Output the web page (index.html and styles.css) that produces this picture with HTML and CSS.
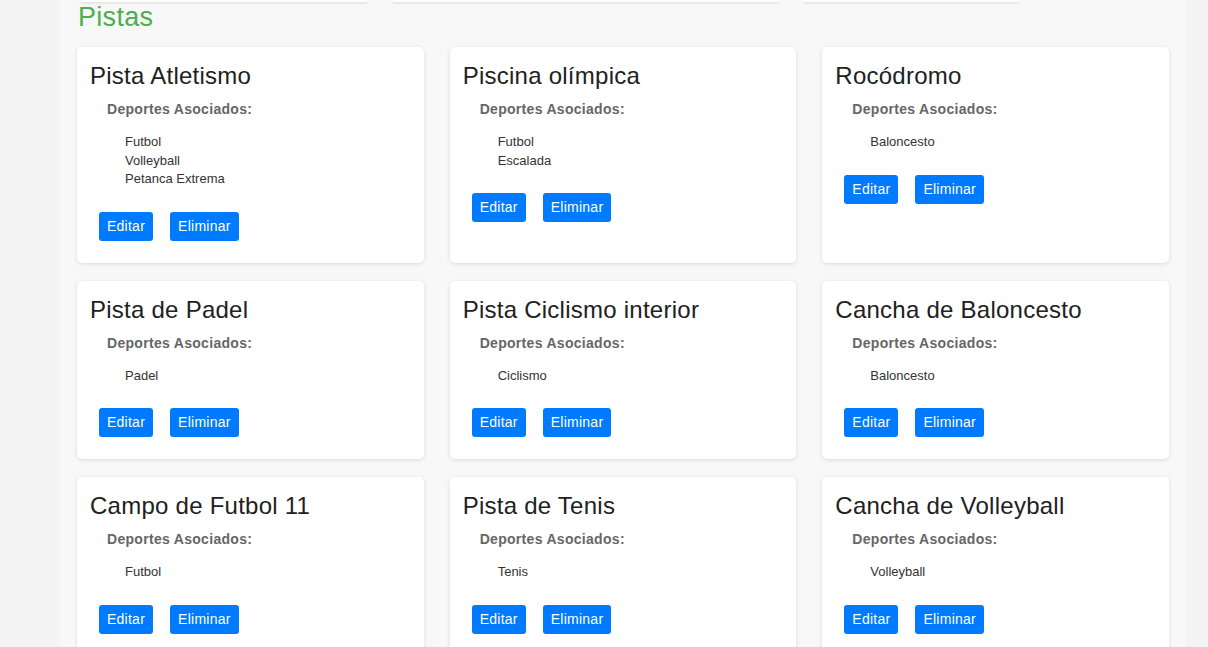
FILE: index.html
```html
<!DOCTYPE html>
<html lang="es">
<head>
<meta charset="utf-8">
<title>Pistas</title>
<link rel="stylesheet" href="styles.css">
</head>
<body>
<div class="page">
  <main class="container">
    <div class="prev-row">
      <div class="prev-card prev-a"></div>
      <div class="prev-card prev-b"></div>
      <div class="prev-card prev-c"></div>
    </div>
    <h2 class="section-title">Pistas</h2>
    <div class="grid">
      <div class="card">
        <h3 class="card-title">Pista Atletismo</h3>
        <p class="label">Deportes Asociados:</p>
        <ul class="sports"><li>Futbol</li><li>Volleyball</li><li>Petanca Extrema</li></ul>
        <div class="actions"><button class="btn">Editar</button><button class="btn">Eliminar</button></div>
      </div>
      <div class="card">
        <h3 class="card-title">Piscina olímpica</h3>
        <p class="label">Deportes Asociados:</p>
        <ul class="sports"><li>Futbol</li><li>Escalada</li></ul>
        <div class="actions"><button class="btn">Editar</button><button class="btn">Eliminar</button></div>
      </div>
      <div class="card">
        <h3 class="card-title">Rocódromo</h3>
        <p class="label">Deportes Asociados:</p>
        <ul class="sports"><li>Baloncesto</li></ul>
        <div class="actions"><button class="btn">Editar</button><button class="btn">Eliminar</button></div>
      </div>
      <div class="card">
        <h3 class="card-title">Pista de Padel</h3>
        <p class="label">Deportes Asociados:</p>
        <ul class="sports"><li>Padel</li></ul>
        <div class="actions"><button class="btn">Editar</button><button class="btn">Eliminar</button></div>
      </div>
      <div class="card">
        <h3 class="card-title">Pista Ciclismo interior</h3>
        <p class="label">Deportes Asociados:</p>
        <ul class="sports"><li>Ciclismo</li></ul>
        <div class="actions"><button class="btn">Editar</button><button class="btn">Eliminar</button></div>
      </div>
      <div class="card">
        <h3 class="card-title">Cancha de Baloncesto</h3>
        <p class="label">Deportes Asociados:</p>
        <ul class="sports"><li>Baloncesto</li></ul>
        <div class="actions"><button class="btn">Editar</button><button class="btn">Eliminar</button></div>
      </div>
      <div class="card">
        <h3 class="card-title">Campo de Futbol 11</h3>
        <p class="label">Deportes Asociados:</p>
        <ul class="sports"><li>Futbol</li></ul>
        <div class="actions"><button class="btn">Editar</button><button class="btn">Eliminar</button></div>
      </div>
      <div class="card">
        <h3 class="card-title">Pista de Tenis</h3>
        <p class="label">Deportes Asociados:</p>
        <ul class="sports"><li>Tenis</li></ul>
        <div class="actions"><button class="btn">Editar</button><button class="btn">Eliminar</button></div>
      </div>
      <div class="card">
        <h3 class="card-title">Cancha de Volleyball</h3>
        <p class="label">Deportes Asociados:</p>
        <ul class="sports"><li>Volleyball</li></ul>
        <div class="actions"><button class="btn">Editar</button><button class="btn">Eliminar</button></div>
      </div>
    </div>
  </main>
</div>
</body>
</html>
```

FILE: styles.css
```css
* { box-sizing: border-box; }

html, body {
  margin: 0;
  padding: 0;
  background: #f4f4f4;
  font-family: "Liberation Sans", Arial, sans-serif;
  color: #222;
}

.page {
  height: 647px;
  overflow: hidden;
}

.container {
  margin-left: 60px;
  width: 1126px;
  min-height: 647px;
  background: #f8f8f8;
  padding: 0 17px;
}

.prev-row {
  display: flex;
  height: 2px;
}

.prev-card {
  height: 2px;
  background: #fff;
  border-radius: 0 0 5px 5px;
  box-shadow: 0 1px 3px rgba(0, 0, 0, 0.14);
}

.prev-a { margin-left: 3px; width: 288px; }
.prev-b { margin-left: 24px; width: 388px; }
.prev-c { margin-left: 23px; width: 215px; }

.section-title {
  margin: 0 0 15px 1px;
  font-size: 27px;
  line-height: 30px;
  font-weight: normal;
  letter-spacing: 0.3px;
  color: #4caf50;
}

.grid {
  display: grid;
  grid-template-columns: repeat(3, 1fr);
  column-gap: 26px;
  row-gap: 18px;
}

.card {
  background: #fff;
  border-radius: 5px;
  box-shadow: 0 1px 4px rgba(0, 0, 0, 0.12);
  padding: 14px 13px 22px;
}

.card-title {
  margin: 0;
  font-size: 24px;
  line-height: 29px;
  font-weight: normal;
  letter-spacing: 0.25px;
  color: #212121;
}

.label {
  margin: 11px 0 0 17px;
  font-size: 14px;
  line-height: 17px;
  font-weight: bold;
  letter-spacing: 0.3px;
  color: #666;
}

.sports {
  list-style: none;
  margin: 15px 0 0;
  padding-left: 35px;
  font-size: 13px;
  line-height: 18.5px;
  color: #333;
}

.actions {
  display: flex;
  gap: 17px;
  margin: 23px 0 0 9px;
}

.btn {
  font-family: "Liberation Sans", Arial, sans-serif;
  font-size: 14px;
  line-height: 17px;
  letter-spacing: 0.25px;
  padding: 6px 8px;
  height: 29px;
  border: none;
  border-radius: 3px;
  background: #007bff;
  color: #fff;
}
```
